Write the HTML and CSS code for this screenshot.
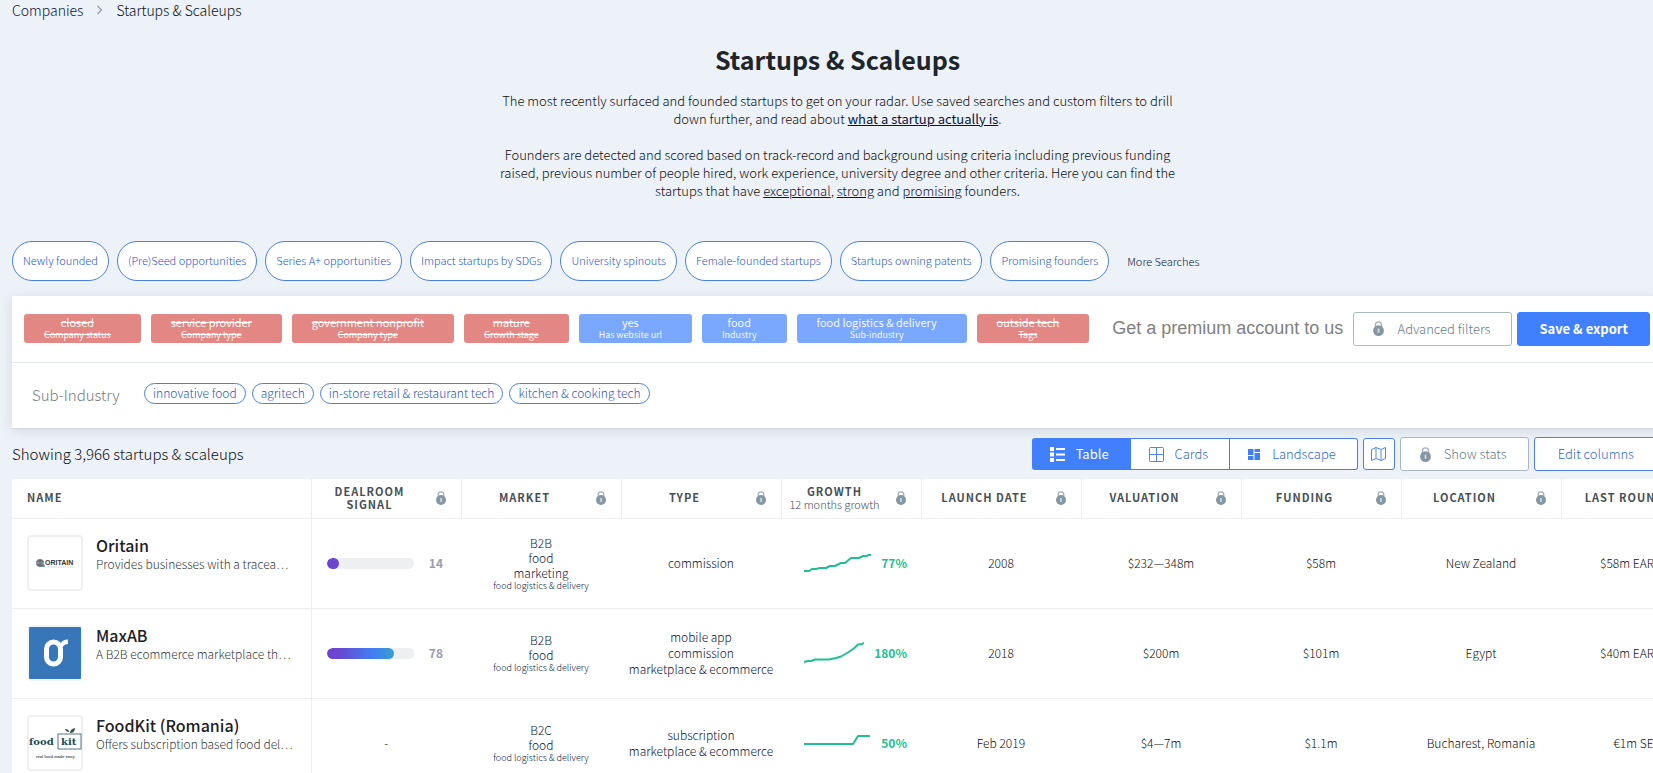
FILE: index.html
```html
<!DOCTYPE html>
<html lang="en">
<head>
<meta charset="utf-8">
<title>Startups &amp; Scaleups</title>
<link rel="stylesheet" href="styles.css">
</head>
<body>
<svg class="defs" width="0" height="0" aria-hidden="true">
  <symbol id="lock" viewBox="0 0 10 14">
    <path d="M2.2 6V3.6a2.8 2.8 0 0 1 5.6 0V6" fill="none" stroke="#a3b0b9" stroke-width="1.3"/>
    <circle cx="5" cy="9" r="5" fill="#8497a3"/>
    <path d="M5 7v4" stroke="#d3dbe0" stroke-width="1.6"/>
  </symbol>
</svg>
<main class="page">
  <nav class="crumbs">
    <a href="#">Companies</a>
    <svg width="7" height="10" viewBox="0 0 7 10"><path d="M1.5 1l4 4-4 4" fill="none" stroke="#999" stroke-width="1.2"/></svg>
    <span>Startups &amp; Scaleups</span>
  </nav>
  <header class="intro">
    <h1>Startups &amp; Scaleups</h1>
    <p>The most recently surfaced and founded startups to get on your radar. Use saved searches and custom filters to drill<br>down further, and read about <a class="strong" href="#">what a startup actually is</a>.</p>
    <p>Founders are detected and scored based on track-record and background using criteria including previous funding<br>raised, previous number of people hired, work experience, university degree and other criteria. Here you can find the<br>startups that have <a href="#">exceptional</a>, <a href="#">strong</a> and <a href="#">promising</a> founders.</p>
  </header>
  <div class="searches">
    <a class="pill" href="#">Newly founded</a>
    <a class="pill" href="#">(Pre)Seed opportunities</a>
    <a class="pill" href="#">Series A+ opportunities</a>
    <a class="pill" href="#">Impact startups by SDGs</a>
    <a class="pill" href="#">University spinouts</a>
    <a class="pill" href="#">Female-founded startups</a>
    <a class="pill" href="#">Startups owning patents</a>
    <a class="pill" href="#">Promising founders</a>
    <a class="more" href="#">More Searches</a>
  </div>
  <section class="panel">
    <div class="filters">
      <button class="tag not">closed<small>Company status</small></button>
      <button class="tag not">service provider<small>Company type</small></button>
      <button class="tag not">government nonprofit<small>Company type</small></button>
      <button class="tag not">mature<small>Growth stage</small></button>
      <button class="tag">yes<small>Has website url</small></button>
      <button class="tag">food<small>Industry</small></button>
      <button class="tag">food logistics &amp; delivery<small>Sub-industry</small></button>
      <button class="tag not">outside tech<small>Tags</small></button>
      <input class="search" type="text" aria-label="Search" placeholder="Get a premium account to us">
      <button class="btn muted"><svg width="11" height="15"><use href="#lock"/></svg>Advanced filters</button>
      <button class="btn primary">Save &amp; export</button>
    </div>
    <div class="sub">
      <span class="sub-label">Sub-Industry</span>
      <div class="chips">
        <button class="chip">innovative food</button>
        <button class="chip">agritech</button>
        <button class="chip">in-store retail &amp; restaurant tech</button>
        <button class="chip">kitchen &amp; cooking tech</button>
      </div>
    </div>
  </section>
  <div class="toolbar">
    <span class="count">Showing 3,966 startups &amp; scaleups</span>
    <div class="group">
      <button class="seg active"><svg width="15" height="15" viewBox="0 0 15 15" fill="#fff"><path d="M0 0h4v4H0zM0 5.500h4v4H0zM0 11h4v4H0zM6 1h9v2H6zM6 6.500h9v2H6zM6 12h9v2H6z"/></svg>Table</button>
      <button class="seg"><svg width="15" height="15" viewBox="0 0 15 15" fill="none" stroke="#4f86e6"><rect x=".5" y=".5" width="14" height="14" rx="1"/><path d="M7.500 0v15M0 7.500h15"/></svg>Cards</button>
      <button class="seg land"><svg width="12" height="11" viewBox="0 0 12 11" fill="#3f80f5"><path d="M0 0h5.500v6H0zM0 7h5.500v4H0zM6.500 0H12v3H6.500zM6.500 4H12v7H6.500z"/></svg>Landscape</button>
    </div>
    <button class="mapbtn" aria-label="Map"><svg width="15" height="14" viewBox="0 0 15 14" fill="none" stroke="#4f86e6"><path d="M.5 2.500l4.500-2 5 2 4.500-2v11l-4.500 2-5-2-4.500 2zM5 .5v11M10 2.500v11"/></svg></button>
    <button class="btn muted stats"><svg width="11" height="15"><use href="#lock"/></svg>Show stats</button>
    <button class="btn outline">Edit columns</button>
  </div>
  <table class="grid">
    <colgroup><col class="c-name"><col class="c-signal"><col><col><col class="c-growth"><col><col><col><col><col></colgroup>
    <thead>
      <tr>
        <th class="left">Name</th>
        <th><div class="head"><span>Dealroom<br>signal</span><svg width="10" height="14"><use href="#lock"/></svg></div></th>
        <th><div class="head"><span>Market</span><svg width="10" height="14"><use href="#lock"/></svg></div></th>
        <th><div class="head"><span>Type</span><svg width="10" height="14"><use href="#lock"/></svg></div></th>
        <th><div class="head"><span>Growth<small>12 months growth</small></span><svg width="10" height="14"><use href="#lock"/></svg></div></th>
        <th><div class="head"><span>Launch date</span><svg width="10" height="14"><use href="#lock"/></svg></div></th>
        <th><div class="head"><span>Valuation</span><svg width="10" height="14"><use href="#lock"/></svg></div></th>
        <th><div class="head"><span>Funding</span><svg width="10" height="14"><use href="#lock"/></svg></div></th>
        <th><div class="head"><span>Location</span><svg width="10" height="14"><use href="#lock"/></svg></div></th>
        <th><div class="head"><span>Last round</span><svg width="10" height="14"><use href="#lock"/></svg></div></th>
      </tr>
    </thead>
    <tbody>
      <tr>
        <td class="left"><div class="company">
          <svg class="logo" width="56" height="56" viewBox="0 0 56 56"><rect x="1" y="1" width="54" height="54" rx="3" fill="#fff" stroke="#efeff1" stroke-width="2"/><circle cx="13" cy="28" r="4" fill="#8b9299"/><path d="M9.500 26.500q3.500-2 7 0M9.500 29.500q3.500 2 7 0M13 24v8" stroke="#495057" stroke-width=".7" fill="none"/><path d="M14 31h4" stroke="#3c7ac0" stroke-width="1.500"/><path d="M20 32h27" stroke="#c6d8d6" stroke-width=".8"/><text x="18" y="30" font-family="Liberation Sans" font-weight="700" font-size="7" fill="#2e3338">ORITAIN</text></svg>
          <div class="info"><a href="#">Oritain</a><p>Provides businesses with a tracea…</p></div></div></td>
        <td><div class="signal"><span class="track"><span class="fill" style="width:14%"></span></span><b>14</b></div></td>
        <td><div class="links"><a href="#">B2B</a><a href="#">food</a><a href="#">marketing</a><a class="tiny" href="#">food logistics &amp; delivery</a></div></td>
        <td><div class="links"><a href="#">commission</a></div></td>
        <td><div class="growth"><svg width="68" height="22" viewBox="0 0 68 22"><path d="M1 19h5l3-2h4l4-1h6l4-2h5l6-3h4l6-5h8l4-2h3l3-1h2"/></svg><b>77%</b></div></td>
        <td>2008</td><td>$232—348m</td><td>$58m</td><td>New Zealand</td><td>$58m EARLY VC</td>
      </tr>
      <tr>
        <td class="left"><div class="company">
          <svg class="logo" width="56" height="56" viewBox="0 0 56 56"><rect width="56" height="56" rx="4" fill="#f0f7fc"/><rect x="2" y="2" width="52" height="52" rx="1" fill="#3776b8"/><rect x="19.500" y="17" width="14" height="22" rx="7" fill="none" stroke="#fff" stroke-width="5"/><path d="M30 19.500q3 .5 4-1.500 1.500-3.500 7-3.500V19q-4 0-6 4z" fill="#fff"/></svg>
          <div class="info"><a href="#">MaxAB</a><p>A B2B ecommerce marketplace th…</p></div></div></td>
        <td><div class="signal"><span class="track"><span class="fill wide" style="width:78%"></span></span><b>78</b></div></td>
        <td><div class="links"><a href="#">B2B</a><a href="#">food</a><a class="tiny" href="#">food logistics &amp; delivery</a></div></td>
        <td><div class="links loose"><a href="#">mobile app</a><a href="#">commission</a><a href="#">marketplace &amp; ecommerce</a></div></td>
        <td><div class="growth"><svg width="61" height="22" viewBox="0 0 61 22"><path d="M1 20l4-1h3l4-1.500h14l7-1.500 5-1.500 7-4 7-5 3-3 4-.5 2-1"/></svg><b>180%</b></div></td>
        <td>2018</td><td>$200m</td><td>$101m</td><td>Egypt</td><td>$40m EARLY VC</td>
      </tr>
      <tr>
        <td class="left"><div class="company">
          <svg class="logo" width="56" height="56" viewBox="0 0 56 56"><rect x="1" y="1" width="54" height="54" rx="3" fill="#fff" stroke="#efeff1" stroke-width="2"/><text x="2" y="30" font-family="DejaVu Serif" font-weight="700" font-size="10" fill="#234a55">food</text><rect x="31" y="19" width="23" height="15" fill="none" stroke="#557683"/><text x="34" y="30" font-family="DejaVu Serif" font-weight="700" font-size="10" fill="#234a55">kit</text><path d="M43 18q0-4 5-5 0 5-5 5zM42 17q-3 0-4-3 4 0 4 3z" fill="#33554f"/><text x="9" y="43" font-family="Liberation Sans" font-weight="700" font-size="4" fill="#40606d">real food made easy.</text></svg>
          <div class="info"><a href="#">FoodKit (Romania)</a><p>Offers subscription based food del…</p></div></div></td>
        <td>-</td>
        <td><div class="links"><a href="#">B2C</a><a href="#">food</a><a class="tiny" href="#">food logistics &amp; delivery</a></div></td>
        <td><div class="links loose"><a href="#">subscription</a><a href="#">marketplace &amp; ecommerce</a></div></td>
        <td><div class="growth"><svg width="68" height="22" viewBox="0 0 68 22"><path d="M1 12h49l5-8h12"/></svg><b>50%</b></div></td>
        <td>Feb 2019</td><td>$4—7m</td><td>$1.1m</td><td>Bucharest, Romania</td><td>€1m SEED</td>
      </tr>
    </tbody>
  </table>
</main>
</body>
</html>
```
FILE: styles.css
```css
* { box-sizing: border-box; }
body {
  margin: 0;
  overflow: hidden;
  background: #edf1f8;
  color: #0c1013;
  font: 300 13px/18px "Noto Sans CJK SC", "Noto Sans", sans-serif;
}
a { color: #081540; text-decoration: none; }
button, input { font: inherit; }
button { cursor: pointer; white-space: nowrap; }
p, h1 { margin: 0; }
.defs { position: absolute; }
.page { margin: 0 -10px 0 12px; }

.crumbs { display: flex; align-items: center; gap: 13px; height: 20px; font-size: 14px; }

.intro { text-align: center; padding-top: 21px; }
.intro h1 { font-size: 25px; line-height: 36px; font-weight: 700; color: #20252a; margin-bottom: 15px; }
.intro p { margin-bottom: 18px; }
.intro a { text-decoration: underline; }
.intro .strong { font-weight: 400; }

.searches { display: flex; align-items: center; gap: 8px; margin-top: 41px; font-size: 11px; }
.pill { height: 40px; padding: 0 10px; border: 1px solid #4a80dc; border-radius: 20px; background: #fff; color: #2756cc; line-height: 37px; }
.more { margin-left: 10px; }

.panel { margin-top: 15px; background: #fff; border-bottom: 1px solid #d5d7dc; box-shadow: 0 2px 12px rgba(0, 0, 0, .1); }
.filters { display: flex; align-items: center; gap: 10px; height: 67px; padding: 0 13px 1px 12px; border-bottom: 1px solid #e6e9ec; }
.tag { height: 29px; padding: 0 30px 1px 20px; border: 0; border-radius: 3px; background: #7aa7ff; color: #fff; font-size: 11px; line-height: 13px; font-weight: 350; }
.tag small { display: block; font-size: 9px; line-height: 11px; }
.not { background: #e38784; text-decoration: line-through; }
.search { flex: 1; min-width: 0; margin-left: 13px; padding: 0; border: 0; background: none; color: #777; font: 18px "Liberation Sans", sans-serif; }
.search::placeholder { color: #808080; }
.btn { display: flex; align-items: center; justify-content: center; gap: 13px; height: 34px; padding: 0 22px; border: 1px solid #4a80dc; border-radius: 3px; background: #fff; color: #2f6ad2; }
.muted { padding: 0 21px 0 19px; border-color: #a9b8c6; color: #647b8a; }
.primary { margin-left: -5px; padding: 0 21px; border-color: #4080ff; background: #4080ff; color: #fff; font-weight: 700; }
.outline { padding: 0 23px; }
.sub { display: flex; align-items: center; height: 65px; padding: 0 20px; }
.sub-label { width: 112px; padding-bottom: 1px; color: #75797d; font-size: 15px; }
.chips { display: flex; gap: 6px; padding-bottom: 5px; }
.chip { height: 21px; padding: 0 8px; border: 1px solid #4a80dc; border-radius: 11px; background: #fff; color: #1f57c4; font-size: 12px; line-height: 18px; }

.toolbar { display: flex; align-items: center; gap: 5px; height: 50px; padding-right: 5px; }
.count { flex: 1; font-size: 15px; }
.group { display: flex; }
.seg { display: flex; align-items: center; gap: 11px; height: 32px; padding: 0 21px 0 18px; border: 1px solid #4a80dc; border-left: 0; background: #fff; color: #2f6ad2; }
.active { background: #4080ff; border-color: #4080ff; color: #fff; font-weight: 400; border-radius: 3px 0 0 3px; }
.land { gap: 12px; border-radius: 0 3px 3px 0; }
.mapbtn { display: grid; place-items: center; width: 32px; height: 32px; padding: 0; border: 1px solid #4a80dc; border-radius: 3px; background: #fff; }

.grid { width: 1709px; table-layout: fixed; border-collapse: collapse; background: #fff; font-size: 12px; line-height: 16px; }
.grid col { width: 160px; }
.grid .c-name { width: 299px; }
.grid .c-signal { width: 150px; }
.grid .c-growth { width: 140px; }
.grid th, .grid td { padding: 0; border-bottom: 1px solid #ebedef; text-align: center; }
.grid th { height: 39px; padding-bottom: 1px; border-right: 1px solid #ebedef; color: #474f56; font-size: 11px; line-height: 13px; letter-spacing: 1px; text-transform: uppercase; }
.grid td { height: 90px; }
.grid .left { padding-left: 15px; border-right: 1px solid #ebedef; text-align: left; }
.head { display: flex; align-items: center; padding-right: 15px; }
.head span { flex: 1; padding-right: 8px; }
.head small { display: block; font-size: 11px; font-weight: 300; letter-spacing: 0; text-transform: none; white-space: nowrap; }
.company { display: flex; align-items: center; gap: 13px; }
.logo { flex: none; }
.info { padding-bottom: 18px; }
.info a { display: block; color: #1d2125; font-size: 16px; line-height: 20px; font-weight: 500; }
.info p { color: #34393e; line-height: 18px; }
.signal { display: flex; align-items: center; justify-content: space-between; padding: 0 18px 0 15px; }
.signal b { color: #9a9cb0; font-weight: 700; }
.track { width: 87px; height: 11px; border-radius: 6px; background: #eeeff1; overflow: hidden; }
.fill { display: block; height: 11px; border-radius: 6px; background: #6b45d0; }
.wide { background: linear-gradient(90deg, #6b45d0 15%, #4080f5 70%, #36a0cc); }
.links { padding-bottom: 1px; }
.links a { display: block; line-height: 15px; }
.links .tiny { font-size: 9px; line-height: 11px; }
.links.loose a { line-height: 16px; }
.growth { display: flex; align-items: center; justify-content: space-between; padding: 0 14px 0 22px; color: #20bf92; }
.growth b { font-weight: 700; }
.growth path { fill: none; stroke: #20bf92; stroke-width: 2; stroke-linejoin: round; }
```
